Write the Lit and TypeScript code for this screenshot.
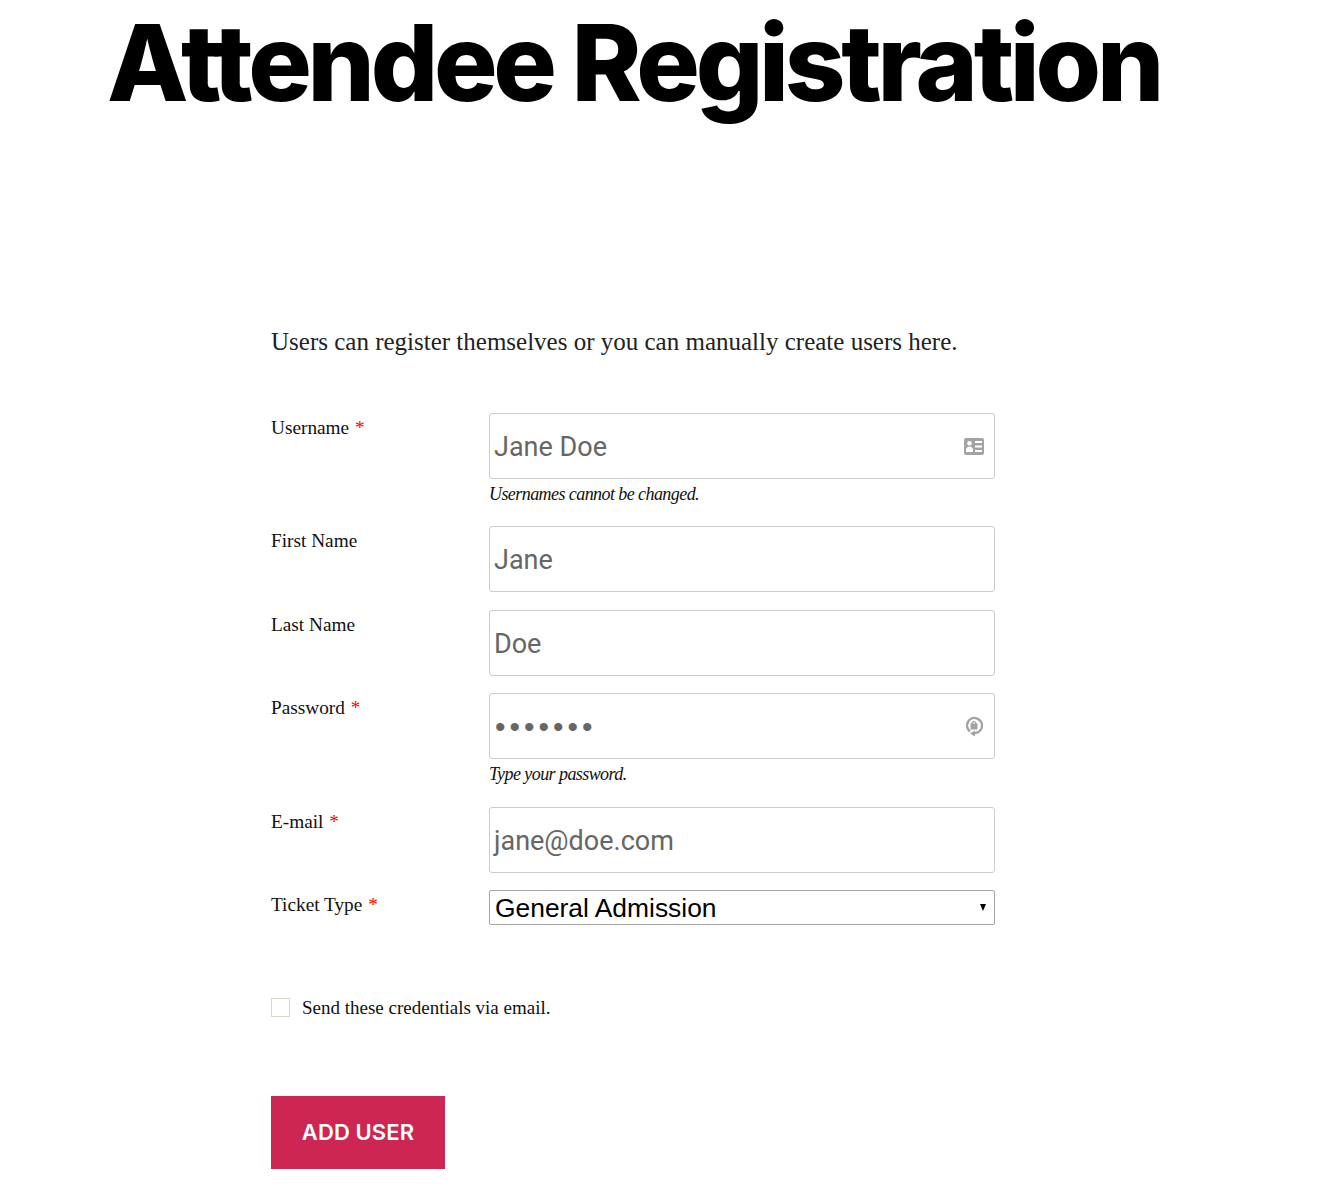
import { LitElement, html, css } from "lit";
import { customElement } from "lit/decorators.js";

@customElement("app-root")
export class AppRoot extends LitElement {
  static styles = css`
    :host { display: block; width: 1318px; min-height: 1193px; background: #fff; font-family: "Liberation Serif", serif; color: #111; }
    h1 { margin: 0; padding: 9px 0 0 107px; font: 800 106px/108px Inter, sans-serif; letter-spacing: -4.3px; color: #000; white-space: nowrap; height: 119px; }
    .content { padding: 196.75px 0 0 271px; width: 724px; }
    .intro { margin: 0 0 54px; font-size: 25px; line-height: 34px; height: 34px; color: #222; white-space: nowrap; }
    .row { display: grid; grid-template-columns: 218px 506px; margin-bottom: 17.5px; }
    .row.hint { margin-bottom: 0; }
    label { font-size: 19.3px; line-height: 30px; }
    .req { color: #f00; margin-left: 1px; }
    .field { position: relative; height: 66px; box-sizing: border-box; border: 1px solid #ccc; border-radius: 3px; font: 27px/66px Roboto, sans-serif; color: #666; padding-left: 4px; }
    .field.pw { font: 30px/66px "Liberation Sans", sans-serif; letter-spacing: 4px; padding-left: 5px; }
    .field svg { position: absolute; }
    .field svg.card { top: 24px; right: 10px; }
    .field svg.lock { top: 22px; right: 11px; }
    .help { font-style: italic; font-size: 18px; letter-spacing: -0.57px; line-height: 30px; height: 47.5px; grid-column: 2; }
    .select { height: 35px; box-sizing: border-box; border: 1px solid #a6a6a6; border-radius: 2px; display: flex; justify-content: space-between; align-items: center; font: 26.4px "Liberation Sans", sans-serif; color: #000; padding: 2px 8px 0 5px; }
    .arrow { width: 0; height: 0; border-left: 3.5px solid transparent; border-right: 3.5px solid transparent; border-top: 7px solid #000; margin-top: -2px; }
    .check { display: flex; align-items: center; gap: 12px; margin-top: 73px; height: 19px; font-size: 19px; line-height: 19px; }
    .box { width: 17px; height: 17px; border: 1px solid #dcd7ca; box-sizing: content-box; }
    button { display: block; margin-top: 79px; width: 174px; height: 73px; border: 0; padding: 0 0 2px; background: #cd2653; color: #fff; font: 600 22px Inter, sans-serif; letter-spacing: .1px; }
  `;
  render() {
    return html`
      <h1>Attendee Registration</h1>
      <div class="content">
        <p class="intro">Users can register themselves or you can manually create users here.</p>
        <div class="row hint"><label>Username <span class="req">*</span></label><div class="field">Jane Doe<svg class="card" width="20" height="17" viewBox="0 0 20 17"><path fill="#a3a3a3" fill-rule="evenodd" d="M2 0h16a2 2 0 0 1 2 2v13a2 2 0 0 1-2 2H2a2 2 0 0 1-2-2V2a2 2 0 0 1 2-2zM11 3v2h7V3zM11 7.500v2h7v-2zM11 12v2h7v-2zM5.500 3a2.300 2.300 0 1 0 0 4.600a2.300 2.300 0 0 0 0-4.600zM2 14h7v-2.500c0-1.500-1.500-3-3.500-3s-3.500 1.500-3.500 3z"/></svg></div><div class="help">Usernames cannot be changed.</div></div>
        <div class="row"><label>First Name</label><div class="field">Jane</div></div>
        <div class="row"><label>Last Name</label><div class="field">Doe</div></div>
        <div class="row hint"><label>Password <span class="req">*</span></label><div class="field pw">•••••••<svg class="lock" width="18" height="21" viewBox="0 0 18 21"><path fill="none" stroke="#a3a3a3" stroke-width="2.200" d="M5 15.500a7.500 7.500 0 1 1 5 1.500"/><path fill="#a3a3a3" d="M5.500 7.500h7v6h-7zM6.500 7.500a2.500 2.500 0 0 1 5 0h-1.300a1.200 1.200 0 0 0-2.400 0zM10 14.500v6l-5-3z"/></svg></div><div class="help">Type your password.</div></div>
        <div class="row"><label>E-mail <span class="req">*</span></label><div class="field">jane@doe.com</div></div>
        <div class="row"><label>Ticket Type <span class="req">*</span></label><div class="select">General Admission<span class="arrow"></span></div></div>
        <div class="check"><span class="box"></span>Send these credentials via email.</div>
        <button>ADD USER</button>
      </div>`;
  }
}
